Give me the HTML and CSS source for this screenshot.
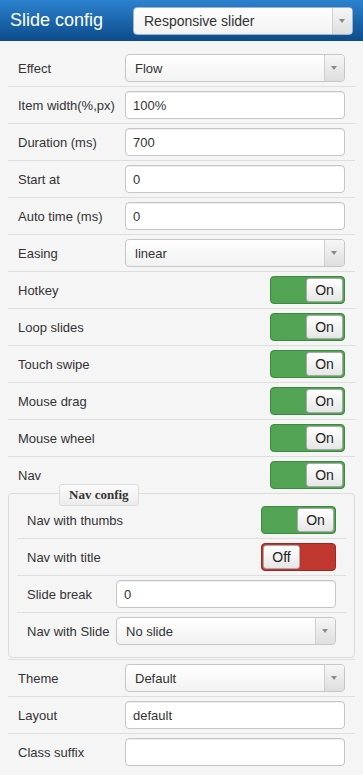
FILE: index.html
```html
<!DOCTYPE html>
<html lang="en">
<head>
    <meta charset="UTF-8">
    <meta name="viewport" content="width=device-width, initial-scale=1.0">
    <title>Slide config</title>
    <link rel="stylesheet" href="styles.css">
</head>
<body>
    <div class="panel">
        <div class="panel-head">
            <span class="panel-title">Slide config</span>
            <div class="select select-head"><span>Responsive slider</span><i class="caret"></i></div>
        </div>

        <div class="form">
            <div class="row">
                <label>Effect</label>
                <div class="select"><span>Flow</span><i class="caret"></i></div>
            </div>
            <div class="row">
                <label>Item width(%,px)</label>
                <input class="input" type="text" value="100%">
            </div>
            <div class="row">
                <label>Duration (ms)</label>
                <input class="input" type="text" value="700">
            </div>
            <div class="row">
                <label>Start at</label>
                <input class="input" type="text" value="0">
            </div>
            <div class="row">
                <label>Auto time (ms)</label>
                <input class="input" type="text" value="0">
            </div>
            <div class="row">
                <label>Easing</label>
                <div class="select"><span>linear</span><i class="caret"></i></div>
            </div>
            <div class="row">
                <label>Hotkey</label>
                <div class="switch"><span class="knob">On</span></div>
            </div>
            <div class="row">
                <label>Loop slides</label>
                <div class="switch"><span class="knob">On</span></div>
            </div>
            <div class="row">
                <label>Touch swipe</label>
                <div class="switch"><span class="knob">On</span></div>
            </div>
            <div class="row">
                <label>Mouse drag</label>
                <div class="switch"><span class="knob">On</span></div>
            </div>
            <div class="row">
                <label>Mouse wheel</label>
                <div class="switch"><span class="knob">On</span></div>
            </div>
            <div class="row no-line">
                <label>Nav</label>
                <div class="switch"><span class="knob">On</span></div>
            </div>

            <div class="group">
                <fieldset>
                    <legend>Nav config</legend>
                    <div class="row">
                        <label>Nav with thumbs</label>
                        <div class="switch"><span class="knob">On</span></div>
                    </div>
                    <div class="row">
                        <label>Nav with title</label>
                        <div class="switch off"><span class="knob">Off</span></div>
                    </div>
                    <div class="row">
                        <label>Slide break</label>
                        <input class="input" type="text" value="0">
                    </div>
                    <div class="row no-line">
                        <label>Nav with Slide</label>
                        <div class="select"><span>No slide</span><i class="caret"></i></div>
                    </div>
                </fieldset>
            </div>

            <div class="row">
                <label>Theme</label>
                <div class="select"><span>Default</span><i class="caret"></i></div>
            </div>
            <div class="row">
                <label>Layout</label>
                <input class="input" type="text" value="default">
            </div>
            <div class="row no-line">
                <label>Class suffix</label>
                <input class="input" type="text" value="">
            </div>
        </div>
    </div>
</body>
</html>
```

FILE: styles.css
```css
body {
    margin: 0;
    background: #f5f5f5;
    font-family: "Liberation Sans", Arial, sans-serif;
    font-size: 13px;
    color: #333;
}
.panel-head {
    height: 41px;
    display: flex;
    align-items: center;
    justify-content: space-between;
    padding: 0 10px;
    background: linear-gradient(#2c82cf, #0d4b8b);
}
.panel-title {
    color: white;
    font-size: 18px;
}
.form {
    padding: 9px 8px 0;
}
.row {
    display: flex;
    align-items: center;
    justify-content: space-between;
    padding: 4px 10px;
    border-bottom: 1px solid #dedede;
}
.row.no-line { border-bottom: none; }

.input,
.select {
    box-sizing: border-box;
    width: 220px;
    height: 28px;
    border: 1px solid #c6c6c6;
    border-radius: 4px;
    font-family: inherit;
    font-size: 13px;
    color: #333;
}
.input {
    margin: 0;
    padding: 0 7px;
    background: white;
    box-shadow: inset 0 1px 1px rgba(0,0,0,0.075);
    outline: none;
}
.select {
    display: flex;
    align-items: center;
    background: linear-gradient(#ffffff, #f2f2f2);
    overflow: hidden;
}
.select span {
    flex: 1;
    padding-left: 9px;
}
.select .caret {
    width: 19px;
    align-self: stretch;
    border-left: 1px solid #cfcfcf;
    background: linear-gradient(#f6f6f6, #dedede);
    position: relative;
}
.select .caret::after {
    content: "";
    position: absolute;
    left: 6px;
    top: 11px;
    border-top: 4px solid #8a8a8a;
    border-left: 3px solid transparent;
    border-right: 3px solid transparent;
}
.select-head {
    font-size: 14px;
    border-color: #9fb4c9;
}
.select-head span { padding-left: 10px; }

.switch {
    box-sizing: border-box;
    width: 75px;
    height: 28px;
    padding: 1px;
    display: flex;
    justify-content: flex-end;
    border: 1px solid #3c8a3f;
    border-radius: 4px;
    background: #52a354;
}
.switch.off {
    justify-content: flex-start;
    border-color: #9c2a23;
    background: #c0372f;
}
.knob {
    box-sizing: border-box;
    width: 37px;
    display: flex;
    align-items: center;
    justify-content: center;
    border: 1px solid #a9a9a9;
    border-radius: 3px;
    background: linear-gradient(#ffffff, #e6e6e6);
    font-size: 14px;
    color: #222;
}

.group {
    padding-bottom: 1px;
    border-bottom: 1px solid #dedede;
}
fieldset {
    position: relative;
    margin: 0;
    padding: 8px;
    border: 1px solid #dcdcdc;
    border-radius: 4px;
}
legend {
    position: absolute;
    top: -10px;
    left: 50px;
    padding: 0 9px;
    line-height: 20px;
    border: 1px solid #dcdcdc;
    border-radius: 3px;
    background: linear-gradient(#fbfbfb, #ececec);
    font-family: "Liberation Serif", "Times New Roman", serif;
    font-weight: bold;
    font-size: 13px;
    color: #333;
}
```
